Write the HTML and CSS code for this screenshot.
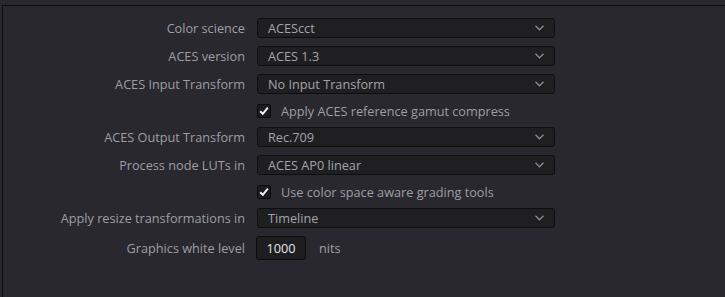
FILE: index.html
```html
<!DOCTYPE html>
<html lang="en">
<head>
  <meta charset="UTF-8">
  <title>Color Management</title>
  <link rel="stylesheet" href="styles.css">
</head>
<body>
  <div class="panel">
    <div class="form">
      <div class="row">
        <label class="label">Color science</label>
        <div class="select"><span>ACEScct</span><svg class="chev" width="9" height="6" viewBox="0 0 9 6"><path d="M0.5 0.8 L4.5 4.8 L8.5 0.8" fill="none" stroke="#8c8c90" stroke-width="1.3"/></svg></div>
      </div>
      <div class="row">
        <label class="label">ACES version</label>
        <div class="select"><span>ACES 1.3</span><svg class="chev" width="9" height="6" viewBox="0 0 9 6"><path d="M0.5 0.8 L4.5 4.8 L8.5 0.8" fill="none" stroke="#8c8c90" stroke-width="1.3"/></svg></div>
      </div>
      <div class="row">
        <label class="label">ACES Input Transform</label>
        <div class="select"><span>No Input Transform</span><svg class="chev" width="9" height="6" viewBox="0 0 9 6"><path d="M0.5 0.8 L4.5 4.8 L8.5 0.8" fill="none" stroke="#8c8c90" stroke-width="1.3"/></svg></div>
      </div>
      <div class="row check-row">
        <span></span>
        <div class="check">
          <span class="box"><svg width="12" height="12" viewBox="0 0 12 12"><path d="M2.2 6.2 L4.8 8.8 L9.8 2.6" fill="none" stroke="#f2f2f2" stroke-width="2"/></svg></span>
          <span>Apply ACES reference gamut compress</span>
        </div>
      </div>
      <div class="row">
        <label class="label">ACES Output Transform</label>
        <div class="select"><span>Rec.709</span><svg class="chev" width="9" height="6" viewBox="0 0 9 6"><path d="M0.5 0.8 L4.5 4.8 L8.5 0.8" fill="none" stroke="#8c8c90" stroke-width="1.3"/></svg></div>
      </div>
      <div class="row">
        <label class="label">Process node LUTs in</label>
        <div class="select"><span>ACES AP0 linear</span><svg class="chev" width="9" height="6" viewBox="0 0 9 6"><path d="M0.5 0.8 L4.5 4.8 L8.5 0.8" fill="none" stroke="#8c8c90" stroke-width="1.3"/></svg></div>
      </div>
      <div class="row check-row">
        <span></span>
        <div class="check">
          <span class="box"><svg width="12" height="12" viewBox="0 0 12 12"><path d="M2.2 6.2 L4.8 8.8 L9.8 2.6" fill="none" stroke="#f2f2f2" stroke-width="2"/></svg></span>
          <span>Use color space aware grading tools</span>
        </div>
      </div>
      <div class="row">
        <label class="label">Apply resize transformations in</label>
        <div class="select"><span>Timeline</span><svg class="chev" width="9" height="6" viewBox="0 0 9 6"><path d="M0.5 0.8 L4.5 4.8 L8.5 0.8" fill="none" stroke="#8c8c90" stroke-width="1.3"/></svg></div>
      </div>
      <div class="row num-row">
        <label class="label">Graphics white level</label>
        <div class="num-wrap">
          <div class="num">1000</div>
          <span class="unit">nits</span>
        </div>
      </div>
    </div>
  </div>
</body>
</html>
```

FILE: styles.css
```css
html, body {
  margin: 0;
  height: 100%;
  overflow: hidden;
}
body {
  background: #28282e;
  font-family: 'Open Sans', 'Noto Sans', sans-serif;
  font-size: 12.7px;
  color: #9e9ea4;
  padding: 5px 0 0 2px;
  box-sizing: border-box;
}
.panel {
  box-sizing: border-box;
  border-top: 1px solid #0c0c0e;
  border-left: 1px solid #0c0c0e;
  height: 100%;
  padding-top: 12px;
}
.form {
  display: flex;
  flex-direction: column;
  gap: 8px;
}
.row {
  display: grid;
  grid-template-columns: 242px 298px;
  column-gap: 12px;
  align-items: center;
  height: 20px;
}
.check-row {
  height: 17px;
}
.num-row {
  height: 24px;
}
.label {
  text-align: right;
  white-space: nowrap;
}
.select {
  box-sizing: border-box;
  height: 20px;
  background: #1f1f22;
  border: 1px solid #0e0e10;
  border-radius: 3px;
  display: flex;
  align-items: center;
  justify-content: space-between;
  padding: 0 10px 0 10px;
  color: #a4a4a8;
}
.chev {
  display: block;
}
.check {
  display: flex;
  align-items: center;
  gap: 10px;
  white-space: nowrap;
}
.box {
  box-sizing: border-box;
  width: 14px;
  height: 14px;
  background: #1c1c1f;
  border: 1px solid #0b0b0d;
  border-radius: 2px;
  display: flex;
  align-items: center;
  justify-content: center;
}
.box svg {
  display: block;
}
.num-wrap {
  display: flex;
  align-items: center;
  gap: 13px;
  margin-left: -1px;
}
.num {
  box-sizing: border-box;
  width: 50px;
  height: 24px;
  background: #1e1e21;
  border: 1px solid #0c0c0e;
  border-radius: 3px;
  color: #e6e6e8;
  text-align: center;
  line-height: 22px;
}
```
